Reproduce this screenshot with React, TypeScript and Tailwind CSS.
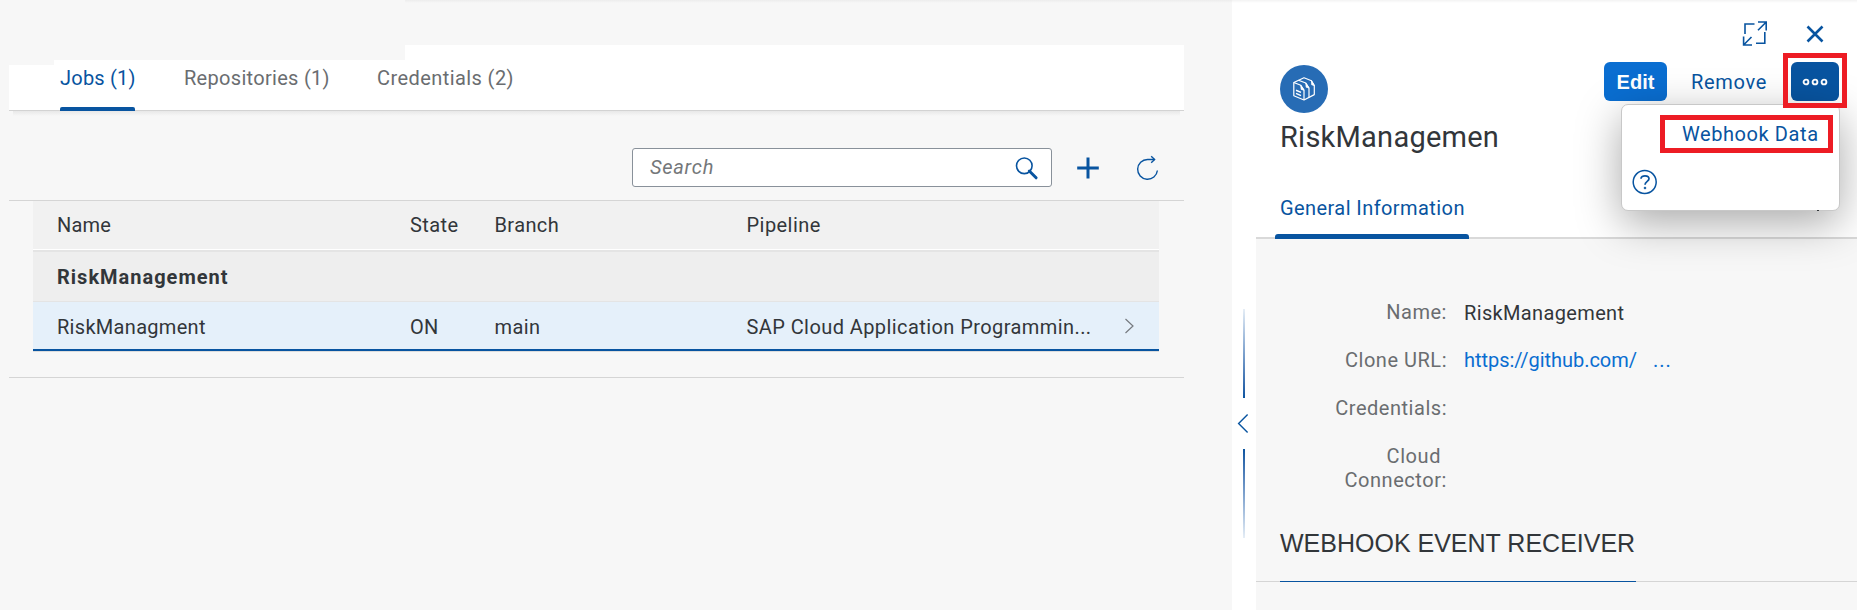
import React from "react";

function SearchIcon() {
  return (
    <svg width="24" height="24" viewBox="0 0 24 24" fill="none" stroke="#0854a0">
      <circle cx="9.3" cy="9.8" r="7.8" strokeWidth="1.6" />
      <path d="M14.3 15 L21.1 21.8" strokeWidth="3" strokeLinecap="round" />
    </svg>
  );
}

function RefreshIcon() {
  return (
    <svg width="24" height="26" viewBox="0 0 24 26" fill="none" stroke="#0854a0" strokeWidth="1.4">
      <path d="M19.5 4.5 H12.5 A9.9 9.9 0 1 0 22.4 15.5" />
      <path d="M16.2 1.2 L19.6 4.5 L16.2 7.8" />
    </svg>
  );
}

function FullScreenIcon() {
  return (
    <svg width="26" height="26" viewBox="0 0 26 26" fill="none" stroke="#0854a0" strokeWidth="1.6">
      <path d="M3 14 V4 H12.5" />
      <path d="M22.8 12 V23.3 H14" />
      <path d="M16 2 H24.2 V10.5 M24 2.2 L16 10.3" />
      <path d="M1.6 16.5 V25 H10 M1.8 24.8 L9.5 17" />
    </svg>
  );
}

function ProductIcon() {
  return (
    <svg width="24" height="26" viewBox="0 0 24 26" fill="none" stroke="#fff" strokeWidth="1.2" strokeLinejoin="round">
      <path d="M1.8 6.5 V19.8 L12 24 L22.3 18.6 V9.5 L19.5 4.8 L12 1.8 Z" />
      <path d="M1.8 6.5 L8.8 9.3 L12 14.2 V24" />
      <path d="M6.5 4.3 L13.8 7 L17 12 V21.4" />
      <path d="M8.8 9.3 L9.2 13.4 L12 14.2 Z M13.8 7 L14.2 11.2 L17 12 Z M19.5 4.8 L19.7 8.8 L22.3 9.5 Z" fill="#fff" strokeWidth="0.8" />
      <path d="M4 14.2 L9 16.4 M4 17.4 L9 19.6" strokeWidth="1.5" />
    </svg>
  );
}

const columns = "grid grid-cols-[353px_84.5px_252px_1fr_38px] items-center pl-6";

function JobsPane() {
  return (
    <section className="flex w-[1232px] flex-col">
      <div className="ml-[405px] h-[3px] shrink-0 bg-gradient-to-b from-[#ededed] to-[#f7f7f7]" />
      <div className="mr-12 ml-[9px] flex flex-col pt-[42px]">
        <nav className="flex h-[66px] items-stretch border-b border-[#d3d3d3] bg-white pl-[51px] text-[#6a6d70] [clip-path:polygon(0_20px,45px_20px,45px_15px,396px_15px,396px_0,100%_0,100%_100%,0_100%)]">
          <div className="relative mr-[49px] flex w-[75px] items-center tracking-[0.22px] text-[#0854a0]">
            <span className="whitespace-nowrap">Jobs (1)</span>
            <span className="absolute -bottom-px left-0 h-1 w-full rounded-t-[2px] bg-[#0854a0]" />
          </div>
          <div className="mr-[46px] flex w-[147px] items-center whitespace-nowrap tracking-[0.3px]">Repositories (1)</div>
          <div className="flex items-center whitespace-nowrap tracking-[0.42px]">Credentials (2)</div>
        </nav>
        <div className="mx-1 h-[5px] bg-gradient-to-b from-[#e8e8e8] to-[#f7f7f7]" />
        <div className="flex h-[85px] items-start justify-end border-b border-[#d5d5d5] pt-8 pr-[24px]">
          <div className="flex h-[39px] w-[420px] items-center justify-between rounded-[3px] border border-[#89919a] bg-white pr-[12px] pl-[17px]">
            <span className="pb-0.5 italic tracking-[0.75px] text-[#74777a]">Search</span>
            <SearchIcon />
          </div>
          <svg className="mt-[8px] ml-[24px]" width="24" height="24" viewBox="0 0 24 24" stroke="#0854a0" strokeWidth="3">
            <path d="M12 1.5 V22.5 M1.2 12 H22.8" />
          </svg>
          <div className="mt-[7px] mr-px ml-[35px]">
            <RefreshIcon />
          </div>
        </div>
        <div className="mr-[25px] ml-6 flex flex-col">
          <div className={`${columns} h-12 bg-[#f1f1f1]`}>
            <span className="tracking-[0.2px]">Name</span>
            <span className="tracking-[0.4px]">State</span>
            <span className="tracking-[0.4px]">Branch</span>
            <span className="tracking-[0.45px]">Pipeline</span>
          </div>
          <div className="h-px bg-white" />
          <div className="flex h-[52px] items-center border-t-2 border-b border-[#e4e4e4] bg-[#eeeeee] pl-6 font-bold tracking-[1px]">
            RiskManagement
          </div>
          <div className={`${columns} h-[49px] border-b-2 border-[#0854a0] bg-[#e5f0fa] pt-[3px]`}>
            <span className="tracking-[0.3px]">RiskManagment</span>
            <span className="tracking-[0.2px]">ON</span>
            <span className="tracking-[0.4px]">main</span>
            <span className="whitespace-nowrap tracking-[0.42px]">SAP Cloud Application Programmin...</span>
            <svg className="mb-[2px] ml-[3px]" width="12" height="16" viewBox="0 0 12 16" fill="none" stroke="#75797e" strokeWidth="1.2">
              <path d="M1.5 1 L9 8 L1.5 15" />
            </svg>
          </div>
          <div className="h-px bg-[#dddddd]" />
        </div>
        <div className="mt-[25px] h-px bg-[#d5d5d5]" />
      </div>
    </section>
  );
}

function Splitter() {
  return (
    <div className="flex w-6 flex-col items-center bg-white pt-[309px]">
      <div className="h-[89px] w-0.5 bg-gradient-to-b from-[#e6eef6] to-[#0854a0]" />
      <svg className="my-[15px] mr-0.5" width="12" height="21" viewBox="0 0 12 21" fill="none" stroke="#0854a0" strokeWidth="1.4">
        <path d="M10.6 1.5 L1.6 10.5 L10.6 19.5" />
      </svg>
      <div className="h-[89px] w-0.5 bg-gradient-to-t from-[#e6eef6] to-[#0854a0]" />
    </div>
  );
}

function OverflowMenu() {
  return (
    <div className="absolute top-[42px] -right-px flex h-[107px] w-[219px] flex-col items-start rounded-[7px] border border-[#c8c8c8] bg-white shadow-[0_12px_44px_0_rgba(0,0,0,0.34)]">
      <div className="mt-[10px] ml-[38px] flex h-[38px] w-[173px] items-center border-5 border-[#ed1c24] pl-[17px] whitespace-nowrap tracking-[0.58px] text-[#0854a0]">
        Webhook Data
      </div>
      <svg className="mt-[16px] ml-[10px]" width="26" height="26" viewBox="0 0 26 26" fill="none" stroke="#0854a0" strokeWidth="1.5">
        <circle cx="12.7" cy="13" r="11.5" />
        <path d="M9 9.8 C9 5.8 17 5.8 17 9.8 C17 12.4 13 12.4 13 15.8" strokeWidth="1.7" />
        <circle cx="13" cy="19" r="0.9" fill="#0854a0" strokeWidth="0.8" />
      </svg>
      <span className="absolute right-[20px] -bottom-px h-px w-0.5 bg-[#32363a]" />
    </div>
  );
}

function Field({ label, children }: { label: string; children?: React.ReactNode }) {
  return (
    <div className="flex h-12 items-start leading-6">
      <div className="w-[191px] text-right tracking-[0.52px] text-[#6a6d70]">{label}</div>
      <div className="pl-[17px] whitespace-nowrap">{children}</div>
    </div>
  );
}

function DetailPane() {
  return (
    <section className="flex flex-1 flex-col">
      <header className="relative flex h-[239px] flex-col border-b-2 border-[#d9d9d9] bg-white pl-6">
        <div className="-ml-12 h-[3px] shrink-0 bg-gradient-to-b from-[#f3f3f3] to-white" />
        <div className="flex h-[62px] shrink-0 items-start justify-end pt-[17px] pr-[33px]">
          <FullScreenIcon />
          <svg className="mt-[5px] ml-[38px]" width="18" height="18" viewBox="0 0 18 18" stroke="#0854a0" strokeWidth="2.6">
            <path d="M1.5 1.5 L16.5 16.5 M16.5 1.5 L1.5 16.5" />
          </svg>
        </div>
        <div className="flex h-12 shrink-0 justify-between">
          <div className="flex size-12 items-center justify-center rounded-full bg-[#276cb5]">
            <ProductIcon />
          </div>
          <div className="relative z-10 mt-[-3px] mr-[18px] flex h-[39px] items-center">
            <button className="h-[39px] w-[63px] rounded-[6px] bg-[#0a6ed1] font-['Liberation_Sans',sans-serif] font-bold text-white">Edit</button>
            <button className="ml-6 w-[100px] text-left tracking-[0.7px] text-[#0854a0]">Remove</button>
            <div className="relative flex">
              <button className="flex h-[39px] w-12 items-center justify-center rounded-[6px] bg-[#0854a0]">
                <svg width="26" height="8" viewBox="0 0 26 8" fill="none" stroke="#fff" strokeWidth="1.9">
                  <circle cx="4" cy="4" r="2.4" />
                  <circle cx="13" cy="4" r="2.4" />
                  <circle cx="22" cy="4" r="2.4" />
                </svg>
              </button>
              <OverflowMenu />
              <span className="absolute -top-[9px] -left-2 h-[55px] w-16 border-5 border-[#ed1c24]" />
            </div>
          </div>
        </div>
        <h1 className="mt-[4px] h-10 shrink-0 text-[29px] leading-10 tracking-[0.24px]">RiskManagemen</h1>
        <div className="relative mt-[33px] -ml-[5px] flex h-[47px] w-[194px] shrink-0 items-start pt-1 pl-[5px] leading-7 whitespace-nowrap tracking-[0.42px] text-[#0854a0]">
          General Information
          <span className="absolute bottom-[-2px] left-0 h-[5px] w-full rounded-t-[3px] bg-[#0854a0]" />
        </div>
      </header>
      <div className="flex flex-col pt-[61px]">
        <Field label="Name:">
          <span className="relative top-px tracking-[0.35px]">RiskManagement</span>
        </Field>
        <Field label="Clone URL:">
          <span className="tracking-[-0.04px] text-[#0a6ed1]">
            https://github.com/<span className="ml-[16px] tracking-[1px]">...</span>
          </span>
        </Field>
        <Field label="Credentials:" />
        <div className="flex h-12 w-[191px] flex-col items-end text-right leading-6 tracking-[0.56px] text-[#6a6d70]">
          <span className="pr-[6px]">Cloud</span>
          <span>Connector:</span>
        </div>
        <div className="mt-[33px] flex border-b border-[#d5d5d5] pl-6">
          <h2 className="-mb-px h-[57px] w-[356px] border-b border-[#0854a0] font-['Liberation_Sans',sans-serif] text-[25px] leading-9 whitespace-nowrap">
            WEBHOOK EVENT RECEIVER
          </h2>
        </div>
      </div>
    </section>
  );
}

export default function App() {
  return (
    <main className="flex h-[610px] w-[1857px] overflow-hidden bg-[#f7f7f7] font-['Roboto',sans-serif] text-xl leading-6 text-[#32363a]">
      <JobsPane />
      <Splitter />
      <DetailPane />
    </main>
  );
}
